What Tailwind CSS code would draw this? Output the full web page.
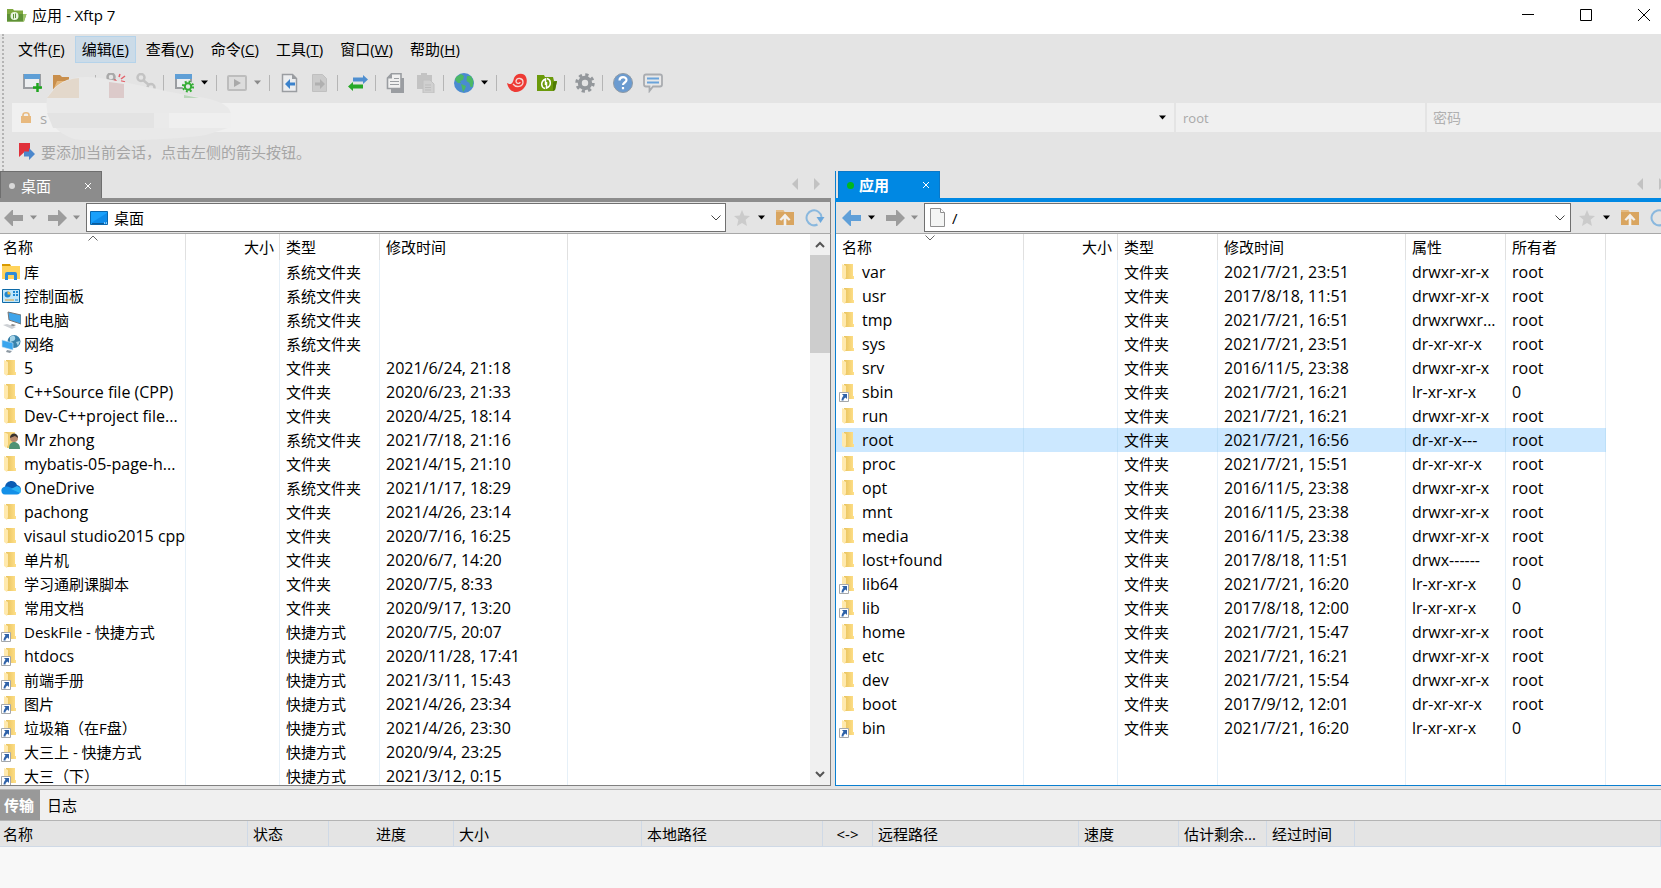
<!DOCTYPE html>
<html lang="zh-CN">
<head>
<meta charset="utf-8">
<title>应用 - Xftp 7</title>
<script src="https://cdn.jsdelivr.net/npm/@tailwindcss/browser@4"></script>
</head>
<body class="flex h-screen flex-col overflow-hidden bg-[#e4e4e4] font-['Open_Sans','Noto_Sans_CJK_SC',sans-serif] text-[15px] leading-6 text-black">

<svg class="absolute h-0 w-0" aria-hidden="true">
  <defs>
    <linearGradient id="gold" x1="0" x2="1"><stop offset="0" stop-color="#e8c25c"/><stop offset="1" stop-color="#ffe08a"/></linearGradient>
    <symbol id="folder" viewBox="0 0 20 20"><path d="M5 2h9v12h1v3H6z" fill="url(#gold)"/><path d="M3 2l4 2v11l-1 3-3-2z" fill="#ffe9ad"/></symbol>
    <symbol id="link" viewBox="0 0 20 20"><path d="M5 2h9v12h1v3H6z" fill="url(#gold)"/><path d="M3 2l4 2v11l-1 3-3-2z" fill="#ffe9ad"/><path d="M.5 10.500h9v9h-9z" fill="#fff" stroke="#a5a8ab"/><path d="M3 12h5v5l-1.500-1.500C5 16.500 4.600 17 4.500 18.500H2.500c0-2 .8-3.500 2-4.800z" fill="#2f62a8"/></symbol>
    <symbol id="user" viewBox="0 0 20 20"><path d="M3 2h11v16H6z" fill="url(#gold)"/><path d="M3 2l4 2v11l-2 3-2-2z" fill="#ffe9ad"/><path d="M8 19c0-5 2-7 5-7s6 2 6 7z" fill="#4f9274"/><circle cx="13" cy="8" r="4" fill="#b98a6c"/><path d="M9 8c0-6 8-6 8 0l-3-2z" fill="#39332f"/></symbol>
    <symbol id="library" viewBox="0 0 20 20"><path d="M1 2h8l1 2H1z" fill="#d99a00"/><path d="M1 4h18v13H1z" fill="#ffd35c"/><path d="M4 18v-6q0-2 2-2h8q2 0 2 2v6h-3v-5H7v5z" fill="#2b8ad8"/></symbol>
    <symbol id="panel" viewBox="0 0 20 20"><path d="M1.500 3.500h17v13h-17z" fill="#bfe6fb" stroke="#0d6aa8"/><circle cx="6.500" cy="8.500" r="3" fill="#1f87d0"/><path d="M6.500 8.500v-3a3 3 0 0 1 3 3z" fill="#f4b942"/><path d="M12 5h2v2h-2zM15 5h2v2h-2zM12 8h2v2h-2zM15 8h2v2h-2z" fill="#1f87d0"/><path d="M4 14h9" stroke="#e39a28"/><path d="M14 14h3" stroke="#1f87d0"/></symbol>
    <symbol id="pc" viewBox="0 0 20 20"><path d="M7 2l13 3v9L8 10z" fill="#3fa4ea" stroke="#777"/><path d="M11 14l4 1-4 2-2-1z" fill="#888"/><path d="M2 15l4-1 9 3-4 2z" fill="#cdd0d4"/></symbol>
    <symbol id="network" viewBox="0 0 20 20"><circle cx="13" cy="7.500" r="6.500" fill="#3a82ab"/><path d="M9 3q4-3 5 0t-2 4-3 1zM15 8l4-1-2 5z" fill="#a6d4e8"/><path d="M1 6l11 3v7l-11-3z" fill="#39a5ee" stroke="#c9e3f4" stroke-width=".6"/><path d="M6 16l5 1-2 2-4-1z" fill="#8d99a3"/></symbol>
    <symbol id="onedrive" viewBox="0 0 20 20"><path d="M4 9C5 2 14 1 16 7q4 1 4 5l-8 2-9-2z" fill="#0a5cb3"/><path d="M1 15q-2-5 3-6.500c3-.5 5 .5 15 5.500q0 2-3 2.500H4q-2 0-3-1.500z" fill="#1490e8"/><path d="M10 11l6-3q4 1 4 5 0 2-1 2z" fill="#2cb3f3"/></symbol>
    <symbol id="down" viewBox="0 0 8 5"><path d="M0 .5h7L3.500 4.500z" fill="currentColor"/></symbol>
    <symbol id="back" viewBox="0 0 20 16"><path d="M0 8L8 0h1v5h10v6H9v5H8z" fill="currentColor"/></symbol>
    <symbol id="chev" viewBox="0 0 10 6"><path d="M.5.5L5 5 9.500.5" fill="none" stroke="currentColor"/></symbol>
    <symbol id="star" viewBox="0 0 18 18"><path d="M9 1l2.300 5.500 5.700.4-4.400 3.800L14 17l-5-3-5 3 1.400-6.300L1 6.900l5.700-.4z" fill="#cbcbcb"/></symbol>
    <symbol id="upfolder" viewBox="0 0 18 17"><path d="M0 1h7l1.500 2H18v13H0z" fill="#d9a560"/><path d="M0 1h7l1.500 2H0z" fill="#e4bb83"/><path d="M9 4.500l5.500 6-1.700 1.300L10.300 9.500V17H7.700V9.500l-2.500 2.300L3.500 10.500z" fill="#f3f0ec"/></symbol>
    <symbol id="refresh" viewBox="0 0 20 18"><path d="M12.500 15.500A7.500 7.500 0 1 1 16.500 8" fill="none" stroke="#8ab8de" stroke-width="2"/><path d="M11.500 8h8l-4 6z" fill="#6aa7dc"/></symbol>
    <symbol id="tri" viewBox="0 0 6 12"><path d="M6 0v12L0 6z" fill="#c2c2c2"/></symbol>
    <symbol id="close" viewBox="0 0 8 8"><path d="M1 1l6 6M7 1L1 7" stroke="currentColor" fill="none"/></symbol>
    <symbol id="xfolder" viewBox="0 0 20 18"><path d="M0 1h7l1 2h8l1 4 3 0-2 9-2 1H0z" fill="#6b9a0b"/><path d="M16 8l4-1-2 9-2 1z" fill="#4f7a04"/><path d="M8 14.500c-4-1-5-7 .5-9.500v6M10 4.500c4 1 5 7-.5 9.500V8" fill="none" stroke="#fff" stroke-width="1.500"/></symbol>
  </defs>
</svg>

<header class="flex h-[34px] shrink-0 items-center bg-white pl-[7px]">
  <svg class="mb-1 h-[15px] w-5" viewBox="0 0 20 15"><path d="M0 1h6l1 1.500h9V6h3.500L17 13.500H0z" fill="#7fa83f"/><path d="M0 6h16v7.500H0z" fill="#5e9136"/><path d="M16 6h3.500L17 13.500h-1z" fill="#9dc36b"/><circle cx="7.500" cy="8" r="4" fill="#e9f3df"/><path d="M6.500 10.500V6M8.500 5.500V10" stroke="#5e9136"/></svg>
  <h1 class="mb-1 ml-[5px]">应用 - Xftp 7</h1>
  <div class="mb-1 ml-auto flex items-center gap-[46px] pr-[11px]">
    <button aria-label="最小化"><svg class="h-3 w-3" viewBox="0 0 12 12"><path d="M0 5.500h12" stroke="#000"/></svg></button>
    <button aria-label="最大化"><svg class="h-3 w-3" viewBox="0 0 12 12"><path d="M.5.5h11v11H.5z" fill="none" stroke="#000"/></svg></button>
    <button aria-label="关闭"><svg class="h-3 w-3" viewBox="0 0 12 12"><path d="M0 0l12 12M12 0L0 12" stroke="#000" fill="none"/></svg></button>
  </div>
</header>

<section class="relative h-[137px] shrink-0 pl-3 before:absolute before:inset-y-0 before:left-[2px] before:border-l-2 before:border-dotted before:border-[#b4b4b4]">
  <nav class="-ml-px flex h-[30px] items-center gap-[3px]">
    <button class="h-[27px] border border-transparent px-[6px]">文件(<u>F</u>)</button>
    <button class="h-[27px] border border-[#b5d3ea] bg-[#cbdbe8] px-[6px]">编辑(<u>E</u>)</button>
    <button class="h-[27px] border border-transparent px-[6px]">查看(<u>V</u>)</button>
    <button class="h-[27px] border border-transparent px-[6px]">命令(<u>C</u>)</button>
    <button class="h-[27px] border border-transparent px-[6px]">工具(<u>T</u>)</button>
    <button class="h-[27px] border border-transparent px-[6px]">窗口(<u>W</u>)</button>
    <button class="h-[27px] border border-transparent px-[6px]">帮助(<u>H</u>)</button>
  </nav>

  <div class="flex h-[37px] items-center pl-px">
    <button class="ml-[10px]" aria-label="新建"><svg class="h-5 w-5" viewBox="0 0 20 20"><path d="M1 2h16v13H1z" fill="#eceef0" stroke="#9a9da1" stroke-width="2"/><path d="M1 1h16v5H1z" fill="#5f9fd6"/><path d="M14.500 10v9M10 14.500h9" stroke="#1fa51f" stroke-width="2.500"/></svg></button>
    <button class="ml-[10px]" aria-label="打开"><svg class="h-5 w-5" viewBox="0 0 20 20"><path d="M0 2h7l2 2h7v13H0z" fill="#c98f4c"/><path d="M4 8h16l-4 10H0z" fill="#e4b77c"/></svg></button>
    <svg class="ml-[7px] h-[5px] w-2 text-black"><use href="#down"/></svg>
    <i class="ml-[7px] h-4 w-px bg-[#b5b5b5]"></i>
    <button class="ml-[10px]" aria-label="断开"><svg class="h-5 w-5" viewBox="0 0 20 20" fill="none"><circle cx="5" cy="4" r="3.500" stroke="#a9a9a9" stroke-width="2.500"/><path d="M8 7l3 3" stroke="#d8303a" stroke-width="3"/><path d="M13 4l1-3M15 6l4-3M15 8l4 1" stroke="#e4626b" stroke-width="1.500"/></svg></button>
    <button class="ml-[10px]" aria-label="重新连接"><svg class="h-5 w-5" viewBox="0 0 20 20" fill="none" stroke="#c3c3c3" stroke-width="2.500"><circle cx="5" cy="4.500" r="3.500"/><circle cx="15" cy="14.500" r="3.500"/><path d="M7 7l6 5"/></svg></button>
    <i class="ml-[7px] h-4 w-px bg-[#b5b5b5]"></i>
    <button class="ml-[10px]" aria-label="会话属性"><svg class="h-5 w-5" viewBox="0 0 20 20"><path d="M2 2h15v13H2z" fill="#eceef0" stroke="#9a9da1" stroke-width="2"/><path d="M1 1h17v5H1z" fill="#5f9fd6"/><circle cx="14" cy="13.500" r="5.500" fill="#e6e8e8"/><circle cx="14" cy="13.500" r="3.200" fill="none" stroke="#35ad35" stroke-width="2"/><circle cx="14" cy="13.500" r="5" fill="none" stroke="#35ad35" stroke-width="2.200" stroke-dasharray="1.900 2.030"/></svg></button>
    <svg class="ml-[7px] h-[5px] w-2 text-black"><use href="#down"/></svg>
    <i class="ml-[7px] h-4 w-px bg-[#b5b5b5]"></i>
    <button class="ml-[10px]" aria-label="运行"><svg class="h-5 w-5" viewBox="0 0 20 20"><rect x="1" y="3" width="18" height="14" rx="1" fill="#dcdcdc" stroke="#bdbdbd" stroke-width="2"/><path d="M7 6l7 4-7 4z" fill="#a9a9a9"/></svg></button>
    <svg class="ml-[7px] h-[5px] w-2 text-[#8a8a8a]"><use href="#down"/></svg>
    <i class="ml-[7px] h-4 w-px bg-[#b5b5b5]"></i>
    <button class="ml-[10px]" aria-label="传到左侧"><svg class="h-5 w-5" viewBox="0 0 20 20"><path d="M2.500 1.500h10l4 4v13h-14z" fill="#eceef0" stroke="#9a9da1" stroke-width="1.500"/><path d="M12 1l5 5h-5z" fill="#9a9da1"/><path d="M5 11l5-5v3.500h5v3h-5V16z" fill="#3b82cc"/></svg></button>
    <button class="ml-[10px]" aria-label="传到右侧"><svg class="h-5 w-5" viewBox="0 0 20 20"><path d="M2.500 1.500h10l4 4v13h-14z" fill="#cbcbcb" stroke="#c0c0c0"/><path d="M15 11l-5-5v3.500H5v3h5V16z" fill="#b0b0b0"/></svg></button>
    <i class="ml-[7px] h-4 w-px bg-[#b5b5b5]"></i>
    <button class="ml-[10px]" aria-label="同步"><svg class="h-5 w-5" viewBox="0 0 20 20"><path d="M20 6.500L15 2v2.500H5v4h10V11z" fill="#4f8fd0"/><path d="M0 13.500L5 9v2.500h10v4H5V18z" fill="#27a827"/></svg></button>
    <i class="ml-[7px] h-4 w-px bg-[#b5b5b5]"></i>
    <button class="ml-[10px]" aria-label="复制"><svg class="h-5 w-5" viewBox="0 0 20 20"><path d="M5 5h13v15H5z" fill="#9a9da1"/><path d="M5.500.8h9.500v14.700H1.500V5z" fill="#f0f0f0" stroke="#9a9da1" stroke-width="1.600"/><path d="M1 5.500L6 .5v5z" fill="#9a9da1"/><path d="M8 5.500h5M4 8.500h9M4 11.500h9" stroke="#9a9da1"/></svg></button>
    <button class="ml-[10px]" aria-label="粘贴"><svg class="h-5 w-5" viewBox="0 0 20 20"><path d="M1 2h4V0h6v2h5v14H1z" fill="#c3c3c3"/><path d="M7 7h7l4 4v9H7z" fill="#d0d0d0" stroke="#c0c0c0"/><path d="M9 12h6M9 14.500h6M9 17h6" stroke="#bdbdbd"/></svg></button>
    <i class="ml-[7px] h-4 w-px bg-[#b5b5b5]"></i>
    <button class="ml-[10px]" aria-label="语言"><svg class="h-5 w-5" viewBox="0 0 20 20"><circle cx="10" cy="10" r="10" fill="#4a8bd0"/><path d="M2 4l5-3 3 2-1 4-3 1 1 2H4L1 7zM7 11l5 2-1 3-2 3-1-4zM13 3l4 0 2.500 5-1 6-2 0-1-4-3-2z" fill="#4cb865"/></svg></button>
    <svg class="ml-[7px] h-[5px] w-2 text-black"><use href="#down"/></svg>
    <i class="ml-[7px] h-4 w-px bg-[#b5b5b5]"></i>
    <button class="ml-[10px]" aria-label="Xshell"><svg class="h-5 w-5" viewBox="0 0 20 20"><path d="M0 10c5 3 6-1 7-5 2-5 10-6 12-1 3 7-3 15-10 15-5 0-8-4-9-9z" fill="#ee3a34"/><path d="M6 11c3 4 10 3 10-2 0-4-6-5-7-1 0 3 4 3 4 1" fill="none" stroke="#f6d5d3" stroke-width="1.300"/></svg></button>
    <button class="ml-[10px]" aria-label="Xftp"><svg class="h-5 w-5"><use href="#xfolder"/></svg></button>
    <i class="ml-[7px] h-4 w-px bg-[#b5b5b5]"></i>
    <button class="ml-[10px]" aria-label="选项"><svg class="h-5 w-5" viewBox="0 0 20 20" fill="none" stroke="#93979b"><circle cx="10" cy="10" r="5.200" stroke-width="4"/><circle cx="10" cy="10" r="8.200" stroke-width="3" stroke-dasharray="3.220 3.220"/></svg></button>
    <i class="ml-[7px] h-4 w-px bg-[#b5b5b5]"></i>
    <button class="ml-[10px]" aria-label="帮助"><svg class="h-5 w-5" viewBox="0 0 20 20"><circle cx="10" cy="10" r="9.500" fill="#6b9bd0" stroke="#8f9aa5"/><path d="M6.500 7.500c0-4.500 7-4.500 7-.5 0 2.500-3.500 2.500-3.500 5M10 14v2.300" fill="none" stroke="#fff" stroke-width="2.200"/></svg></button>
    <button class="ml-[10px]" aria-label="反馈"><svg class="h-5 w-5" viewBox="0 0 20 20"><path d="M3 1.500h14q2 0 2 2v8q0 2-2 2h-7L6.500 18v-4.500H3q-2 0-2-2v-8q0-2 2-2z" fill="#e8e8e8" stroke="#a9acb0" stroke-width="1.800"/><path d="M4 5.500h12M4 9.500h12" stroke="#6aa3da" stroke-width="2"/></svg></button>
  </div>

  <form class="mt-[2px] flex h-[29px] gap-[2px] text-[#a8a8a8]">
    <label class="flex flex-1 items-center bg-[#f0f0f0] pl-[9px] pr-[7px]">
      <svg class="h-[11px] w-[10px]" viewBox="0 0 10 11"><path d="M0 4h10v7H0z" fill="#e8b97e"/><path d="M2 4.500V3q0-2.200 3-2.200T8 3v1.500" fill="none" stroke="#e8b97e" stroke-width="1.600"/></svg>
      <input class="ml-[9px] min-w-0 flex-1 bg-transparent text-[15px] outline-none" aria-label="主机" value="s">
      <svg class="h-[5px] w-2 text-black"><use href="#down"/></svg>
    </label>
    <input class="w-[249px] bg-[#f0f0f0] px-[7px] text-[13px] outline-none" aria-label="用户名" value="root">
    <input class="w-[234px] bg-[#f0f0f0] px-[6px] text-[14px] outline-none placeholder:text-[#b0b0b0]" type="password" aria-label="密码" placeholder="密码">
  </form>

  <p class="flex h-10 items-center pl-[7px] text-[#a6a6a6]">
    <svg class="mr-[6px] h-[18px] w-4" viewBox="0 0 16 18"><path d="M0 0h11v14L5.500 9 0 14z" fill="#e0313b"/><path d="M16 11l-6-6v3.500H5v5h5V17z" fill="#4b87cc"/></svg>
    要添加当前会话，点击左侧的箭头按钮。
  </p>

  <svg class="absolute left-[43px] top-[42px] h-[66px] w-[188px]" viewBox="0 0 188 66" aria-hidden="true">
    <path d="M4 22C12 6 28 0 45 1c25 1 65 12 98 18 25 3 45 8 45 20v12l-25 8q-25 4-70 5H40C20 64 0 46 4 22z" fill="#e9e9e9"/>
    <path d="M12 12Q24 2 36 2v20H4z" fill="#e3d8cb"/><path d="M66 6l15 2v14H66z" fill="#dccaca"/><path d="M141 19l15 3h-15z" fill="#b9d5b9"/>
    <path d="M4 37h107v15H10z" fill="#e3e3e3"/><path d="M111 37h15v15h-15z" fill="#eaeaea"/><path d="M126 37h62v15h-62z" fill="#efefef"/>
  </svg>
</section>

<main class="-mr-[5px] grid min-h-0 flex-1 grid-cols-2 gap-1">
  <section class="flex min-h-0 flex-col border-b border-[#808080]">
    <div class="flex h-[31px] shrink-0 items-end justify-between border-b-4 border-[#8c8c8c]">
      <button class="flex h-[27px] w-[102px] items-center border border-b-0 border-[#6e6e6e] bg-[#8c8c8c] pl-2 pr-[9px] pt-px text-white"><i class="h-[6px] w-[6px] rounded-full bg-[#d8d8d8]"></i><span class="ml-[6px]">桌面</span><svg class="ml-auto h-2 w-2"><use href="#close"/></svg></button>
      <div class="mb-2 mr-[11px] flex gap-4"><svg class="h-3 w-[6px]"><use href="#tri"/></svg><svg class="h-3 w-[6px] rotate-180"><use href="#tri"/></svg></div>
    </div>
    <div class="flex h-8 shrink-0 items-center border-b border-r border-b-[#a8a8a8] border-r-[#808080] pl-1">
      <button aria-label="后退"><svg class="h-4 w-5 text-[#9c9c9c]"><use href="#back"/></svg></button>
      <svg class="ml-[6px] h-[5px] w-2 text-[#8c8c8c]"><use href="#down"/></svg>
      <button class="ml-[9px]" aria-label="前进"><svg class="h-4 w-5 rotate-180 text-[#9c9c9c]"><use href="#back"/></svg></button>
      <svg class="ml-[6px] h-[5px] w-2 text-[#8c8c8c]"><use href="#down"/></svg>
      <label class="ml-[5px] flex h-[29px] flex-1 items-center border border-[#707070] bg-white px-[3px]">
        <svg class="h-[14px] w-[18px]" viewBox="0 0 18 14"><path d="M.5.5h17v13H.5z" fill="#19a0fb" stroke="#0a66ad"/><path d="M1 12L17 2v10z" fill="#0d8bea"/><path d="M2 12.500h12" stroke="#0b5c9b"/><path d="M14 12h1M16 12h1" stroke="#fff"/></svg>
        <input class="ml-[6px] min-w-0 flex-1 outline-none" aria-label="本地路径" value="桌面">
        <svg class="mr-px h-[6px] w-[10px] text-[#444]"><use href="#chev"/></svg>
      </label>
      <button class="ml-[7px]" aria-label="收藏"><svg class="h-[18px] w-[18px]"><use href="#star"/></svg></button>
      <svg class="ml-[7px] h-[5px] w-2 text-black"><use href="#down"/></svg>
      <button class="ml-[10px]" aria-label="上级目录"><svg class="h-[17px] w-[18px]"><use href="#upfolder"/></svg></button>
      <button class="ml-[11px] mr-[5px]" aria-label="刷新"><svg class="h-[18px] w-5"><use href="#refresh"/></svg></button>
    </div>
    <div class="flex min-h-0 flex-1 border-r border-[#808080] bg-white">
      <div class="relative min-w-0 flex-1 overflow-hidden">
        <svg class="absolute left-[88px] top-px h-[6px] w-[10px] rotate-180 text-[#666]"><use href="#chev"/></svg>
        <table class="w-[568px] table-fixed border-separate border-spacing-0 text-left">
          <colgroup><col class="w-[186px]"><col class="w-[94px]"><col class="w-[100px]"><col class="w-[188px]"></colgroup>
          <thead><tr class="h-[26px] *:border-r *:border-[#e0e0e0] *:p-0 *:pl-[6px] *:font-normal"><th class="pl-[3px]!">名称</th><th class="pr-[5px]! text-right">大小</th><th>类型</th><th>修改时间</th></tr></thead>
          <tbody id="local"></tbody>
        </table>
      </div>
      <div class="flex w-5 flex-col items-center bg-[#f0f0f0]">
        <button class="flex h-[21px] w-full shrink-0 items-center justify-center text-[#555]" aria-label="向上滚动"><svg class="h-[7px] w-[10px]" viewBox="0 0 10 7"><path d="M1 6l4-4 4 4" fill="none" stroke="currentColor" stroke-width="2"/></svg></button>
        <div class="h-[98px] w-full bg-[#cdcdcd]"></div>
        <button class="mt-auto flex h-[21px] w-full shrink-0 items-center justify-center text-[#555]" aria-label="向下滚动"><svg class="h-[7px] w-[10px]" viewBox="0 0 10 7"><path d="M1 1l4 4 4-4" fill="none" stroke="currentColor" stroke-width="2"/></svg></button>
      </div>
    </div>
  </section>

  <section class="-mr-[10px] flex min-h-0 flex-col border-b border-l border-[#0a7fd0]">
    <div class="-ml-px flex h-[31px] shrink-0 items-end justify-between border-b-4 border-[#0088e3] pl-[3px]">
      <button class="flex h-[27px] w-[102px] items-center border border-b-0 border-[#0a78c8] bg-[#0088e3] pl-2 pr-[9px] font-bold text-white"><i class="h-[7px] w-[7px] rounded-full bg-[#00b81c]"></i><span class="ml-[5px]">应用</span><svg class="ml-auto h-2 w-2"><use href="#close"/></svg></button>
      <div class="mb-2 mr-[11px] flex gap-4"><svg class="h-3 w-[6px]"><use href="#tri"/></svg><svg class="h-3 w-[6px] rotate-180"><use href="#tri"/></svg></div>
    </div>
    <div class="flex h-8 shrink-0 items-center border-b border-b-[#a8a8a8] pl-[6px]">
      <button aria-label="后退"><svg class="h-4 w-5 text-[#5f9fd8]"><use href="#back"/></svg></button>
      <svg class="ml-[6px] h-[5px] w-2 text-black"><use href="#down"/></svg>
      <button class="ml-[9px]" aria-label="前进"><svg class="h-4 w-5 rotate-180 text-[#9c9c9c]"><use href="#back"/></svg></button>
      <svg class="ml-[6px] h-[5px] w-2 text-[#8c8c8c]"><use href="#down"/></svg>
      <label class="ml-[5px] flex h-[29px] flex-1 items-center border border-[#707070] bg-white px-[5px]">
        <svg class="h-[19px] w-[15px]" viewBox="0 0 15 19"><path d="M.5.500h10l4 4v14H.5z" fill="#f4f5f4" stroke="#8f8f8f"/><path d="M10.500.5v4h4" fill="#fff" stroke="#8f8f8f"/></svg>
        <input class="ml-[7px] min-w-0 flex-1 outline-none" aria-label="远程路径" value="/">
        <svg class="h-[6px] w-[10px] text-[#444]"><use href="#chev"/></svg>
      </label>
      <button class="ml-[7px]" aria-label="收藏"><svg class="h-[18px] w-[18px]"><use href="#star"/></svg></button>
      <svg class="ml-[7px] h-[5px] w-2 text-black"><use href="#down"/></svg>
      <button class="ml-[10px]" aria-label="上级目录"><svg class="h-[17px] w-[18px]"><use href="#upfolder"/></svg></button>
      <button class="ml-[11px] mr-[6px]" aria-label="刷新"><svg class="h-[18px] w-5"><use href="#refresh"/></svg></button>
    </div>
    <div class="relative min-h-0 flex-1 overflow-hidden bg-white">
      <svg class="absolute left-[89px] top-px h-[6px] w-[10px] text-[#666]"><use href="#chev"/></svg>
      <table class="w-[770px] table-fixed border-separate border-spacing-0 text-left">
        <colgroup><col class="w-[188px]"><col class="w-[94px]"><col class="w-[100px]"><col class="w-[188px]"><col class="w-[100px]"><col class="w-[100px]"></colgroup>
        <thead><tr class="h-[26px] *:border-r *:border-[#e0e0e0] *:p-0 *:pl-[6px] *:font-normal"><th>名称</th><th class="pr-[5px]! text-right">大小</th><th>类型</th><th>修改时间</th><th>属性</th><th>所有者</th></tr></thead>
        <tbody id="remote"></tbody>
      </table>
    </div>
  </section>
</main>

<footer class="mt-[3px] shrink-0 border-t border-[#b4b4b4] bg-[#f8f8f8]">
  <div class="flex h-[31px] border-b border-[#b4b4b4] bg-[#f0f0f0]">
    <button class="w-10 bg-[#999] pl-1 text-left font-bold text-white">传输</button>
    <button class="px-[7px]">日志</button>
  </div>
  <div class="h-[67px]">
    <table class="w-full table-fixed border-separate border-spacing-0 bg-[#e4e4e4] text-left">
      <colgroup><col class="w-[248px]"><col class="w-[81px]"><col class="w-[125px]"><col class="w-[188px]"><col class="w-[181px]"><col class="w-[50px]"><col class="w-[206px]"><col class="w-[100px]"><col class="w-[88px]"><col class="w-[88px]"><col></colgroup>
      <thead><tr class="h-[26px] *:overflow-hidden *:whitespace-nowrap *:border-b *:border-r *:border-[#cfd9e6] *:p-0 *:pl-[5px] *:font-normal"><th class="pl-[3px]!">名称</th><th>状态</th><th class="p-0! text-center">进度</th><th>大小</th><th>本地路径</th><th class="p-0! text-center">&lt;-&gt;</th><th>远程路径</th><th>速度</th><th>估计剩余...</th><th>经过时间</th><th></th></tr></thead>
    </table>
  </div>
</footer>

<script>
const S = '系统文件夹', F = '文件夹', K = '快捷方式';
const local = [
  ['library','库',S,''],['panel','控制面板',S,''],['pc','此电脑',S,''],['network','网络',S,''],
  ['folder','5',F,'2021/6/24, 21:18'],['folder','C++Source file (CPP)',F,'2020/6/23, 21:33'],
  ['folder','Dev-C++project file...',F,'2020/4/25, 18:14'],['user','Mr zhong',S,'2021/7/18, 21:16'],
  ['folder','mybatis-05-page-h...',F,'2021/4/15, 21:10'],['onedrive','OneDrive',S,'2021/1/17, 18:29'],
  ['folder','pachong',F,'2021/4/26, 23:14'],['folder','visaul studio2015 cpp',F,'2020/7/16, 16:25'],
  ['folder','单片机',F,'2020/6/7, 14:20'],['folder','学习通刷课脚本',F,'2020/7/5, 8:33'],
  ['folder','常用文档',F,'2020/9/17, 13:20'],['link','DeskFile - 快捷方式',K,'2020/7/5, 20:07'],
  ['link','htdocs',K,'2020/11/28, 17:41'],['link','前端手册',K,'2021/3/11, 15:43'],
  ['link','图片',K,'2021/4/26, 23:34'],['link','垃圾箱（在F盘）',K,'2021/4/26, 23:30'],
  ['link','大三上 - 快捷方式',K,'2020/9/4, 23:25'],['link','大三（下）',K,'2021/3/12, 0:15']
];
const D = 'drwxr-xr-x', R = 'dr-xr-xr-x', L = 'lr-xr-xr-x';
const remote = [
  ['folder','var',F,'2021/7/21, 23:51',D,'root'],['folder','usr',F,'2017/8/18, 11:51',D,'root'],
  ['folder','tmp',F,'2021/7/21, 16:51','drwxrwxr...','root'],['folder','sys',F,'2021/7/21, 23:51',R,'root'],
  ['folder','srv',F,'2016/11/5, 23:38',D,'root'],['link','sbin',F,'2021/7/21, 16:21',L,'0'],
  ['folder','run',F,'2021/7/21, 16:21',D,'root'],['folder','root',F,'2021/7/21, 16:56','dr-xr-x---','root'],
  ['folder','proc',F,'2021/7/21, 15:51',R,'root'],['folder','opt',F,'2016/11/5, 23:38',D,'root'],
  ['folder','mnt',F,'2016/11/5, 23:38',D,'root'],['folder','media',F,'2016/11/5, 23:38',D,'root'],
  ['folder','lost+found',F,'2017/8/18, 11:51','drwx------','root'],['link','lib64',F,'2021/7/21, 16:20',L,'0'],
  ['link','lib',F,'2017/8/18, 12:00',L,'0'],['folder','home',F,'2021/7/21, 15:47',D,'root'],
  ['folder','etc',F,'2021/7/21, 16:21',D,'root'],['folder','dev',F,'2021/7/21, 15:54',D,'root'],
  ['folder','boot',F,'2017/9/12, 12:01',R,'root'],['link','bin',F,'2021/7/21, 16:20',L,'0']
];
const cell = 'h-6 border-r border-[#e6f0f8] p-0 pl-[6px] whitespace-nowrap';
const selectedCell = 'h-6 border-r border-[#bcdff8] bg-[#cce8ff] p-0 pl-[6px] whitespace-nowrap';
// Latin-only strings are set one pixel larger than Chinese ones.
const size = t => /^[\x20-\x7e]+$/.test(t) ? 'text-[16px] leading-6' : 'text-[15px] leading-6';
function fill(id, rows, nameClass) {
  document.getElementById(id).innerHTML = rows.map(([icon, name, ...rest]) => {
    const c = name === 'root' ? selectedCell : cell;
    return `<tr><td class="${c}"><div class="${nameClass} ${size(name)}"><svg class="mr-[3px] h-5 w-5 shrink-0"><use href="#${icon}"/></svg>${name}</div></td><td class="${c}"></td>` +
      rest.map(t => `<td class="${c} ${size(t)}">${t}</td>`).join('') + '</tr>';
  }).join('') + '<tr>' + '<td class="h-96 border-r border-[#e6f0f8]"></td>'.repeat(rows[0].length) + '</tr>';
}
fill('local', local, '-ml-[5px] flex h-6 items-center');
fill('remote', remote, '-ml-[3px] flex h-6 items-center');
</script>
</body>
</html>
